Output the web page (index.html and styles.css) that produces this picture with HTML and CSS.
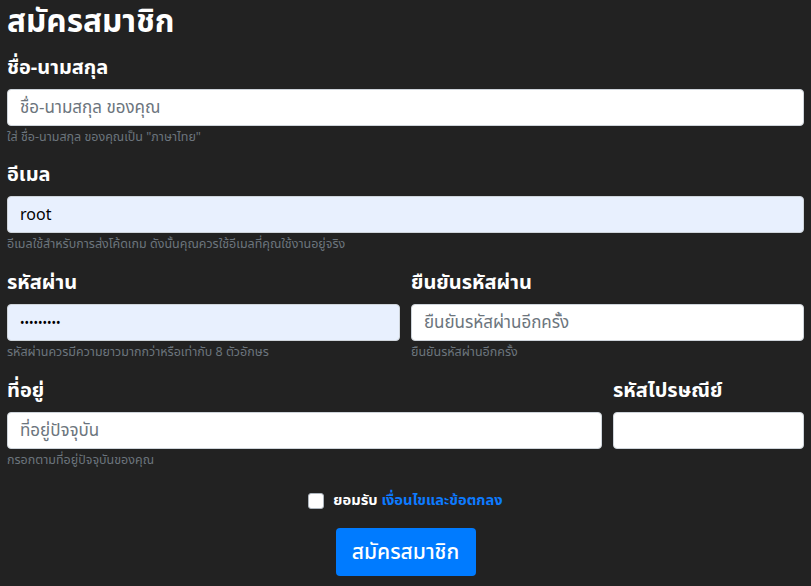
FILE: index.html
```html
<!DOCTYPE html>
<html lang="th">
<head>
<meta charset="utf-8">
<link rel="stylesheet" href="styles.css">
</head>
<body>
<form class="form">
  <h1 class="title">สมัครสมาชิก</h1>
  <div class="field first">
    <label class="label">ชื่อ-นามสกุล</label>
    <div class="input"><span class="ph">ชื่อ-นามสกุล ของคุณ</span></div>
    <small class="help">ใส่ ชื่อ-นามสกุล ของคุณเป็น "ภาษาไทย"</small>
  </div>
  <div class="field">
    <label class="label">อีเมล</label>
    <div class="input filled"><span class="val">root</span></div>
    <small class="help">อีเมลใช้สำหรับการส่งโค้ดเกม ดังนั้นคุณควรใช้อีเมลที่คุณใช้งานอยู่จริง</small>
  </div>
  <div class="row half">
    <div class="field">
      <label class="label">รหัสผ่าน</label>
      <div class="input filled"><span class="dots">•••••••••</span></div>
      <small class="help">รหัสผ่านควรมีความยาวมากกว่าหรือเท่ากับ 8 ตัวอักษร</small>
    </div>
    <div class="field">
      <label class="label">ยืนยันรหัสผ่าน</label>
      <div class="input"><span class="ph">ยืนยันรหัสผ่านอีกครั้ง</span></div>
      <small class="help">ยืนยันรหัสผ่านอีกครั้ง</small>
    </div>
  </div>
  <div class="row wide">
    <div class="field">
      <label class="label">ที่อยู่</label>
      <div class="input"><span class="ph">ที่อยู่ปัจจุบัน</span></div>
      <small class="help">กรอกตามที่อยู่ปัจจุบันของคุณ</small>
    </div>
    <div class="field">
      <label class="label">รหัสไปรษณีย์</label>
      <div class="input"></div>
    </div>
  </div>
  <div class="check">
    <span class="box"></span>
    <span class="check-text">ยอมรับ <a class="link">เงื่อนไขและข้อตกลง</a></span>
  </div>
  <div class="actions">
    <button type="button" class="btn">สมัครสมาชิก</button>
  </div>
</form>
</body>
</html>
```
FILE: styles.css
```css
html, body {
  margin: 0;
  background: #222222;
}
body {
  font-family: "Noto Sans Thai", "Noto Sans", "DejaVu Sans", sans-serif;
  color: #ffffff;
}
.form {
  padding: 0 7px 0 7px;
}
.title {
  margin: 0;
  padding-top: 1px;
  font-size: 31.5px;
  font-weight: 700;
  line-height: 44px;
}
.field {
  display: flex;
  flex-direction: column;
}
.label {
  font-size: 20px;
  font-weight: 700;
  line-height: 30px;
  margin-top: 8px;
  margin-bottom: 6px;
}
.input {
  height: 37px;
  box-sizing: border-box;
  background: #ffffff;
  border: 1px solid #ced4da;
  border-radius: 4px;
  display: flex;
  align-items: center;
  padding: 0 12px;
  font-size: 17px;
}
.input.filled {
  background: #e8f0fe;
}
.ph {
  color: #6c757d;
}
.val {
  color: #000;
  font-size: 16px;
}
.dots {
  color: #000;
  font-size: 12px;
  letter-spacing: 0;
}
.help {
  font-size: 12.5px;
  color: #6c757d;
  line-height: 16px;
  margin-top: 4px;
  margin-bottom: 7px;
}
.field.first .help {
  margin-bottom: 6px;
}
.row {
  display: grid;
  column-gap: 11px;
}
.row.half {
  grid-template-columns: 1fr 1fr;
}
.row.wide {
  grid-template-columns: calc((100% + 11px) * 0.75 - 11px) 1fr;
}
.check {
  display: flex;
  justify-content: center;
  align-items: center;
  gap: 9px;
  margin-top: 13px;
}
.box {
  width: 16px;
  height: 16px;
  box-sizing: border-box;
  background: #fff;
  border: 1px solid #adb5bd;
  border-radius: 3px;
}
.check-text {
  font-size: 14.7px;
  font-weight: 700;
}
.link {
  color: #0d7bff;
  text-decoration: none;
}
.actions {
  display: flex;
  justify-content: center;
  margin-top: 16px;
}
.btn {
  width: 140px;
  height: 48px;
  border: 0;
  border-radius: 4px;
  background: #007bff;
  color: #fff;
  font-family: inherit;
  font-size: 21px;
  font-weight: 500;
}
```
